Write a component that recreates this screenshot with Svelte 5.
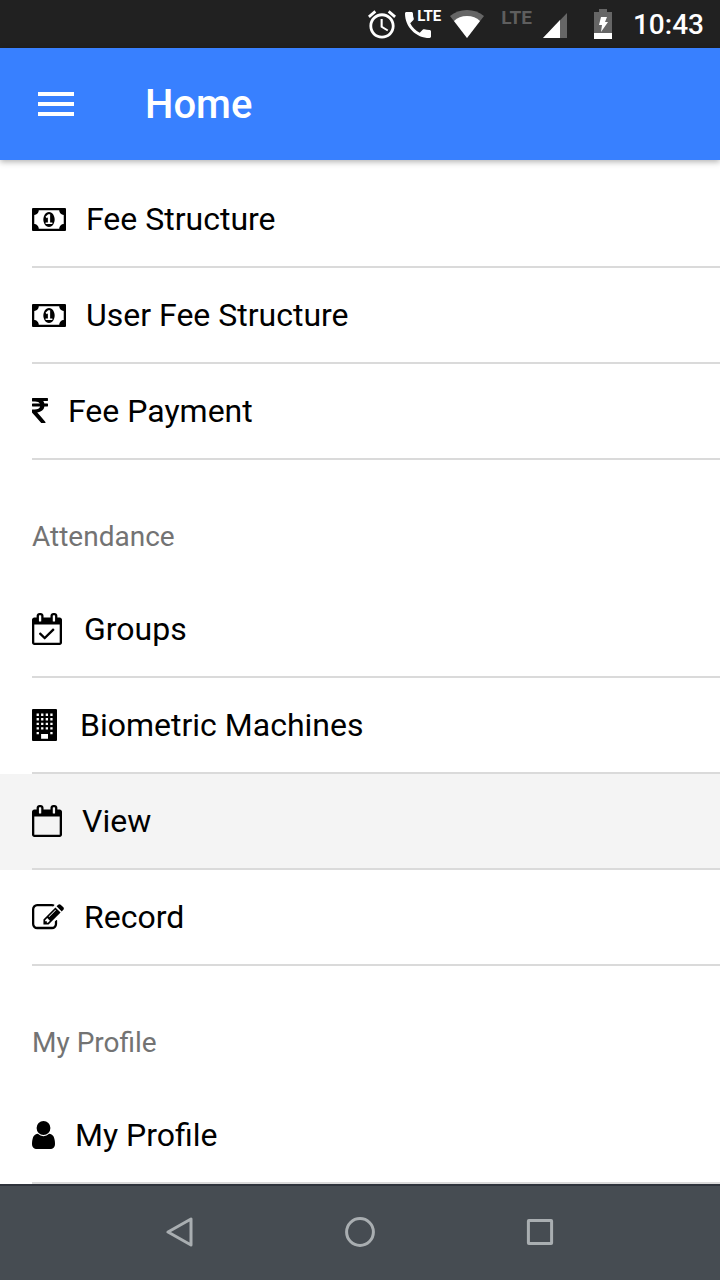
<script>
	let active = 'View';

	// width is the space the glyph takes in the row, w/h the drawn size
	const icons = {
		money: {
			width: 35, w: 34, h: 23, box: '0 256 1920 1280',
			d: 'M768 1152h384v-96h-128v-448h-114l-148 137 77 80q42-37 55-57h2v288h-128v96zm512-256q0 70-21 142t-59.5 134-101.5 101-138 39-138-39-101.5-101-59.5-134-21-142 21-142 59.5-134 101.5-101 138-39 138 39 101.5 101 59.5 134 21 142zm512 256v-512q-106 0-181-75t-75-181h-1152q0 106-75 181t-181 75v512q106 0 181 75t75 181h1152q0-106 75-181t181-75zm128-832v1152q0 26-19 45t-45 19h-1792q-26 0-45-19t-19-45v-1152q0-26 19-45t45-19h1792q26 0 45 19t19 45z'
		},
		rupee: {
			width: 17, w: 16, h: 26, box: '447 128 898 1464',
			d: 'M1345 470v102q0 14-9 23t-23 9h-168q-23 144-129 234t-276 110q167 178 459 536 14 16 4 34-8 18-29 18h-195q-16 0-25-12-306-367-498-571-9-9-9-22v-127q0-13 9.5-22.5t22.5-9.5h112q132 0 212.5-43t102.5-125h-427q-14 0-23-9t-9-23v-102q0-14 9-23t23-9h413q-57-113-268-113h-145q-13 0-22.5-9.5t-9.5-22.5v-133q0-14 9-23t23-9h832q14 0 23 9t9 23v102q0 14-9 23t-23 9h-233q47 61 64 144h171q14 0 23 9t9 23z'
		},
		calendar: {
			width: 31, w: 30, h: 32, box: '64 0 1664 1792',
			d: 'M192 1664h1408v-1024h-1408v1024zm384-1216v-288q0-14-9-23t-23-9h-64q-14 0-23 9t-9 23v288q0 14 9 23t23 9h64q14 0 23-9t9-23zm768 0v-288q0-14-9-23t-23-9h-64q-14 0-23 9t-9 23v288q0 14 9 23t23 9h64q14 0 23-9t9-23zm384-64v1280q0 52-38 90t-90 38h-1408q-52 0-90-38t-38-90v-1280q0-52 38-90t90-38h128v-96q0-66 47-113t113-47h64q66 0 113 47t47 113v96h384v-96q0-66 47-113t113-47h64q66 0 113 47t47 113v96h128q52 0 90 38t38 90z'
		},
		building: {
			width: 29, w: 25, h: 32, box: '0 0 25 32',
			d: 'M1 0h23q1 0 1 1v30q0 1-1 1h-23q-1 0-1-1v-30q0-1 1-1z M4.6 4.6h2.3v2.3h-2.3z M9.1 4.6h2.3v2.3h-2.3z M13.7 4.6h2.3v2.3h-2.3z M18.3 4.6h2.3v2.3h-2.3z M4.6 9.1h2.3v2.3h-2.3z M9.1 9.1h2.3v2.3h-2.3z M13.7 9.1h2.3v2.3h-2.3z M18.3 9.1h2.3v2.3h-2.3z M4.6 13.7h2.3v2.3h-2.3z M9.1 13.7h2.3v2.3h-2.3z M13.7 13.7h2.3v2.3h-2.3z M18.3 13.7h2.3v2.3h-2.3z M4.6 18.3h2.3v2.3h-2.3z M9.1 18.3h2.3v2.3h-2.3z M13.7 18.3h2.3v2.3h-2.3z M18.3 18.3h2.3v2.3h-2.3z M4.6 22.9h2.3v2.3h-2.3z M18.3 22.9h2.3v2.3h-2.3z M9.1 25.1h6.9v4.6h-6.9z'
		},
		edit: {
			width: 33, w: 32, h: 26, box: '0 128 1792 1456',
			d: 'M888 1184l116-116-152-152-116 116v56h96v96h56zm440-720q-16-16-33 1l-350 350q-17 17-1 33t33-1l350-350q17-17 1-33zm80 594v190q0 119-84.5 203.5t-203.5 84.5h-832q-119 0-203.5-84.5t-84.5-203.5v-832q0-119 84.5-203.5t203.5-84.5h832q63 0 117 25 15 7 18 23 3 17-9 29l-49 49q-14 14-32 8-23-6-45-6h-832q-66 0-113 47t-47 113v832q0 66 47 113t113 47h832q66 0 113-47t47-113v-126q0-13 9-22l64-64q15-15 35-7t20 29zm-96-738l288 288-672 672h-288v-288zm444 132l-92 92-288-288 92-92q28-28 68-28t68 28l152 152q28 28 28 68t-28 68z'
		},
		user: {
			width: 24, w: 23, h: 28, box: '256 128 1280 1536',
			d: 'M1536 1399q0 109-62.5 187t-150.5 78h-854q-88 0-150.5-78t-62.5-187q0-85 8.5-160.5t31.5-152 58.5-131 94-89 134.5-34.5q131 128 313 128t313-128q76 0 134.5 34.5t94 89 58.5 131 31.5 152 8.5 160.5zm-256-887q0 159-112.5 271.5t-271.5 112.5-271.5-112.5-112.5-271.5 112.5-271.5 271.5-112.5 271.5 112.5 112.5 271.5z'
		}
	};
	icons.calendarCheck = {
		...icons.calendar,
		width: 33,
		d: icons.calendar.d + 'M1303 964l-512 512q-10 9-23 9t-23-9l-288-288q-9-10-9-23t9-22l46-46q9-9 22-9t23 9l220 220 444-444q10-9 23-9t22 9l46 46q9 9 9 22t-9 23z'
	};

	const sections = [
		{
			title: '',
			items: [
				{ icon: 'money', label: 'Fee Structure' },
				{ icon: 'money', label: 'User Fee Structure' },
				{ icon: 'rupee', label: 'Fee Payment' }
			]
		},
		{
			title: 'Attendance',
			items: [
				{ icon: 'calendarCheck', label: 'Groups' },
				{ icon: 'building', label: 'Biometric Machines' },
				{ icon: 'calendar', label: 'View' },
				{ icon: 'edit', label: 'Record' }
			]
		},
		{
			title: 'My Profile',
			items: [{ icon: 'user', label: 'My Profile' }]
		}
	];
</script>

<div class="app">
	<div class="status">
		<svg width="28" height="29" viewBox="2 1.6 20 20.7" fill="#fff">
			<path d="M22 5.72l-4.6-3.86-1.29 1.53 4.6 3.86L22 5.72zM7.88 3.39L6.6 1.86 2 5.71l1.29 1.53 4.59-3.85zM12.5 8H11v6l4.75 2.85.75-1.23-4-2.37V8zM12 4c-4.97 0-9 4.03-9 9s4.02 9 9 9c4.97 0 9-4.03 9-9s-4.03-9-9-9zm0 16c-3.87 0-7-3.13-7-7s3.13-7 7-7 7 3.13 7 7-3.13 7-7 7z" />
		</svg>
		<div class="call">
			<svg width="26" height="26" viewBox="3 3 18 18" fill="#fff">
				<path d="M6.62 10.79c1.44 2.83 3.76 5.14 6.59 6.59l2.2-2.2c.27-.27.67-.36 1.02-.24 1.12.37 2.33.57 3.57.57.55 0 1 .45 1 1V20c0 .55-.45 1-1 1-9.39 0-17-7.61-17-17 0-.55.45-1 1-1h3.5c.55 0 1 .45 1 1 0 1.25.2 2.45.57 3.57.11.35.03.74-.25 1.02l-2.2 2.2z" />
			</svg>
			<span class="call-badge">LTE</span>
		</div>
		<svg width="34" height="28" viewBox="0 0 34 28">
			<path d="M17 28L0 6Q7 0 17 0T34 6z" fill="#666" />
			<path d="M17 28L4 11Q9 6 17 6T30 11z" fill="#fff" />
		</svg>
		<span class="network">LTE</span>
		<svg class="signal" width="24" height="25" viewBox="0 0 24 25">
			<path d="M0 25L24 0V25z" fill="#666" />
			<path d="M0 25L17 7V25z" fill="#fff" />
		</svg>
		<svg class="battery" width="18" height="30" viewBox="0 0 18 30">
			<path d="M5 0h8v3h5v27H0V3h5z" fill="#666" />
			<path d="M0 24h18v6H0z" fill="#fff" />
			<path d="M7 8h6l-2 5h3L7 23l1-7H5z" fill="#fff" />
		</svg>
		<time>10:43</time>
	</div>

	<header>
		<button class="menu" aria-label="Menu">
			<svg width="36" height="24" viewBox="0 0 36 24" fill="#fff">
				<path d="M0 0h36v4H0zM0 10h36v4H0zM0 20h36v4H0z" />
			</svg>
		</button>
		<h1>Home</h1>
	</header>

	<main>
		{#each sections as section}
			{#if section.title}
				<h2>{section.title}</h2>
			{/if}
			<ul>
				{#each section.items as item}
					{@const icon = icons[item.icon]}
					<li>
						<a href="#top" class:active={active === item.label} on:click|preventDefault={() => (active = item.label)}>
							<span class="row">
								<span class="icon" style="width: {icon.width}px">
									<svg width={icon.w} height={icon.h} viewBox={icon.box} preserveAspectRatio="none">
										<path d={icon.d} fill-rule="evenodd" />
									</svg>
								</span>
								<span>{item.label}</span>
							</span>
						</a>
					</li>
				{/each}
			</ul>
		{/each}
	</main>

	<nav>
		<button aria-label="Back">
			<svg width="30" height="30" viewBox="0 0 30 30"><path d="M26 2v26L3 15z" /></svg>
		</button>
		<button aria-label="Home screen">
			<svg width="30" height="30" viewBox="0 0 30 30"><circle cx="15" cy="15" r="13.4" /></svg>
		</button>
		<button aria-label="Recent apps">
			<svg width="30" height="30" viewBox="0 0 30 30"><rect x="3.4" y="3.4" width="23.2" height="23.2" rx="0.5" /></svg>
		</button>
	</nav>
</div>

<style>
	:global(body) {
		background: #fff;
	}

	.app {
		display: flex;
		flex-direction: column;
		min-height: 100vh;
		color: #000;
		font-family: Roboto, 'Noto Sans', sans-serif;
	}

	.status {
		display: flex;
		align-items: center;
		justify-content: flex-end;
		gap: 9px;
		height: 48px;
		padding-right: 16px;
		background: #212121;
		color: #fff;
	}

	svg {
		display: block;
		flex: none;
	}

	.call {
		position: relative;
		width: 36px;
		padding-top: 2px;
	}

	.call-badge {
		position: absolute;
		top: -2px;
		right: 0;
		font-size: 15px;
		font-weight: 700;
		line-height: 16px;
		background: #212121;
	}

	.network {
		margin: 0 2px 12px 8px;
		color: #5e5e5e;
		font-size: 19px;
		font-weight: 700;
		line-height: 20px;
	}

	.signal {
		margin-top: 3px;
	}

	.battery {
		margin: 0 12px 0 18px;
	}

	time {
		padding-top: 2px;
		font-size: 28px;
		font-weight: 500;
		line-height: 32px;
	}

	header {
		display: flex;
		align-items: center;
		gap: 71px;
		height: 112px;
		padding: 0 38px;
		background: #3880ff;
		color: #fff;
		box-shadow: 0 2px 6px rgba(0, 0, 0, 0.3);
	}

	button {
		padding: 0;
		border: none;
		background: none;
		cursor: pointer;
	}

	h1 {
		margin: 0;
		padding-top: 2px;
		font-size: 40px;
		font-weight: 500;
		line-height: 48px;
	}

	main {
		flex: 1;
		padding-top: 12px;
	}

	h2 {
		margin: 0;
		padding: 61px 32px 29px;
		color: #737373;
		font-size: 28px;
		font-weight: 400;
		line-height: 32px;
	}

	ul {
		margin: 0;
		padding: 0;
		list-style: none;
	}

	a {
		display: block;
		padding-left: 32px;
		color: inherit;
		font-size: 32px;
		line-height: 40px;
		text-decoration: none;
	}

	a.active {
		background: #f4f4f4;
	}

	.row {
		display: flex;
		align-items: center;
		gap: 19px;
		padding: 27px 0;
		border-bottom: 2px solid #dadada;
	}

	.icon {
		flex: none;
	}

	nav {
		display: flex;
		justify-content: center;
		box-sizing: border-box;
		height: 96px;
		padding-bottom: 2px;
		border-top: 2px solid #2e333b;
		background: #464c52;
	}

	nav button {
		display: flex;
		align-items: center;
		justify-content: center;
		width: 25%;
	}

	nav svg {
		fill: none;
		stroke: #a9aeb1;
		stroke-width: 3;
		stroke-linejoin: round;
	}
</style>
